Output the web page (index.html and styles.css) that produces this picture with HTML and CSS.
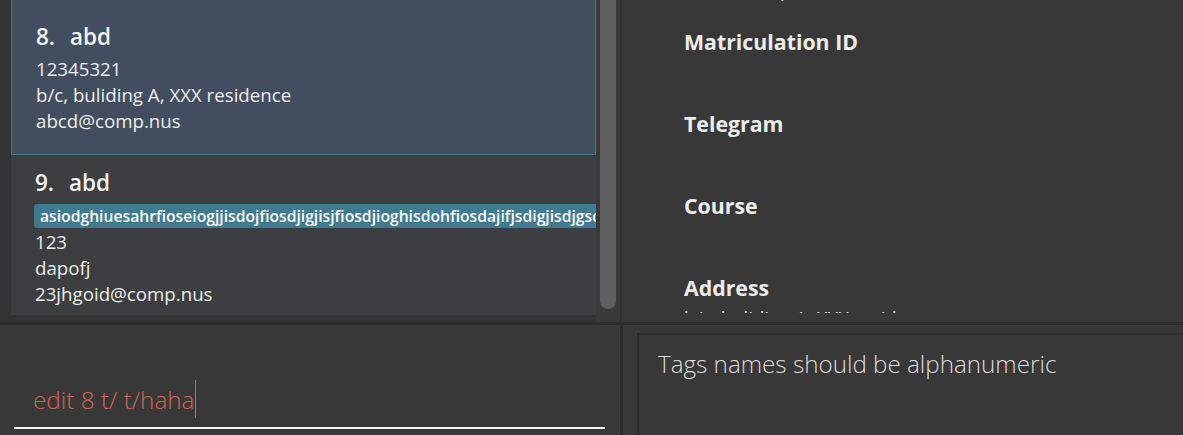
FILE: index.html
```html
<!DOCTYPE html>
<html lang="en">
<head>
<meta charset="utf-8">
<title>Address Book</title>
<link rel="stylesheet" href="styles.css">
</head>
<body>
<div class="app">
  <div class="row row-top">
    <div class="list-pane">
      <div class="list">
        <div class="list-scroll">
          <div class="cell cell-selected">
            <div class="name"><span class="idx">8.</span><span>abd</span></div>
            <div class="tags"></div>
            <div class="line">12345321</div>
            <div class="line">b/c, buliding A, XXX residence</div>
            <div class="line">abcd@comp.nus</div>
          </div>
          <div class="cell">
            <div class="name"><span class="idx">9.</span><span>abd</span></div>
            <div class="tags"><span class="tag">asiodghiuesahrfioseiogjjisdojfiosdjigjisjfiosdjioghisdohfiosdajifjsdigjisdjgsdfjgiosdjfgoisdjfg</span></div>
            <div class="line">123</div>
            <div class="line">dapofj</div>
            <div class="line">23jhgoid@comp.nus</div>
          </div>
        </div>
      </div>
      <div class="scrollbar"><div class="thumb"></div></div>
    </div>
    <div class="vdiv"></div>
    <div class="detail-pane">
      <div class="detail-viewport">
        <div class="fields">
          <div class="field"><div class="label">Email</div><div class="value">abcd@comp.nus</div></div>
          <div class="field"><div class="label">Matriculation ID</div><div class="value"></div></div>
          <div class="field"><div class="label">Telegram</div><div class="value"></div></div>
          <div class="field"><div class="label">Course</div><div class="value"></div></div>
          <div class="field"><div class="label">Address</div><div class="value">b/c, buliding A, XXX residence</div></div>
        </div>
      </div>
    </div>
  </div>
  <div class="hdiv"></div>
  <div class="row row-bottom">
    <div class="command-pane">
      <div class="command"><span class="cmd-text">edit 8 t/ t/haha</span><span class="caret"></span></div>
    </div>
    <div class="vdiv vdiv-bottom"></div>
    <div class="result-pane">
      <div class="result-box">Tags names should be alphanumeric</div>
    </div>
  </div>
</div>
</body>
</html>
```
FILE: styles.css
```css
html, body {
  margin: 0;
  padding: 0;
  background: #383838;
}
body {
  width: 1183px;
  height: 435px;
  overflow: hidden;
  font-family: "Open Sans", "Noto Sans", sans-serif;
  color: #ffffff;
}
.app {
  display: flex;
  flex-direction: column;
  width: 1183px;
  height: 435px;
}
.row {
  display: flex;
}
.row-top {
  height: 322px;
}
.row-bottom {
  height: 110px;
}
.hdiv {
  height: 3px;
  background: #2b2b2b;
}
.vdiv {
  width: 2px;
  background: #2f2f2f;
  flex: none;
}
.vdiv-bottom {
  width: 3px;
  background: #2b2b2b;
}

/* ---------- list ---------- */
.list-pane {
  width: 620px;
  flex: none;
  display: flex;
  background: #333333;
}
.list {
  width: 585px;
  margin-left: 11px;
  overflow: hidden;
}
.list-scroll {
  margin-top: -5px;
}
.cell {
  box-sizing: border-box;
  min-height: 160px;
  padding: 13px 12px 8px 24px;
  background: #3c3e3f;
  display: flex;
  flex-direction: column;
  justify-content: center;
  overflow: hidden;
}
.cell-selected {
  background: #424d5f;
  border: 1px solid #3e7b91;
}
.name {
  font-size: 22.5px;
  font-weight: 600;
  line-height: 30px;
  height: 30px;
  white-space: nowrap;
  color: #f2f2f2;
}
.idx {
  margin-right: 15px;
}
.tags {
  margin-top: 4px;
  display: flex;
}
.tag {
  margin: 2px 0 1px -1px;
  padding: 0 6px;
  background: #3e7b91;
  border-radius: 3px 0 0 3px;
  font-size: 15.7px;
  font-weight: 600;
  line-height: 24px;
  white-space: nowrap;
  color: #ffffff;
}
.line {
  font-size: 18.7px;
  line-height: 26px;
  height: 26px;
  white-space: nowrap;
  color: #ededed;
}
.scrollbar {
  width: 24px;
  flex: none;
  background: #393939;
}
.thumb {
  width: 16px;
  height: 309px;
  margin-left: 4px;
  background: #5f5f5f;
  border-radius: 0 0 8px 8px;
}

/* ---------- detail ---------- */
.detail-pane {
  flex: 1;
  background: #383838;
  overflow: hidden;
}
.detail-viewport {
  height: 313px;
  overflow: hidden;
}
.fields {
  margin-top: -54px;
  padding-left: 62px;
}
.field {
  height: 82px;
}
.label {
  font-size: 21.3px;
  font-weight: 700;
  line-height: 28px;
  color: #ececec;
}
.value {
  font-size: 18.6px;
  line-height: 28px;
  height: 28px;
  margin-top: 2px;
  color: #ececec;
  white-space: nowrap;
}
.value:empty {
  display: none;
}

/* ---------- command ---------- */
.command-pane {
  width: 620px;
  flex: none;
  background: #383838;
  padding: 0 15px 0 14px;
  box-sizing: border-box;
  display: flex;
  flex-direction: column;
  justify-content: flex-end;
}
.command {
  display: flex;
  align-items: center;
  height: 38px;
  padding: 0 0 9px 19px;
  margin-bottom: 6px;
  border-bottom: 2px solid #f4f4f4;
}
.cmd-text {
  font-size: 24.3px;
  font-weight: 300;
  color: #d06651;
  white-space: nowrap;
}
.caret {
  width: 1px;
  height: 38px;
  background: #d06651;
  margin-left: 1px;
}

/* ---------- result ---------- */
.result-pane {
  flex: 1;
  background: #383838;
  padding: 8px 0 0 14px;
  overflow: hidden;
}
.result-box {
  height: 120px;
  border-top: 2px solid #2e2e2e;
  border-left: 2px solid #2e2e2e;
  padding: 14px 0 0 19px;
  font-size: 24.2px;
  font-weight: 300;
  line-height: 30px;
  color: #dcdcdc;
  white-space: nowrap;
}
```
